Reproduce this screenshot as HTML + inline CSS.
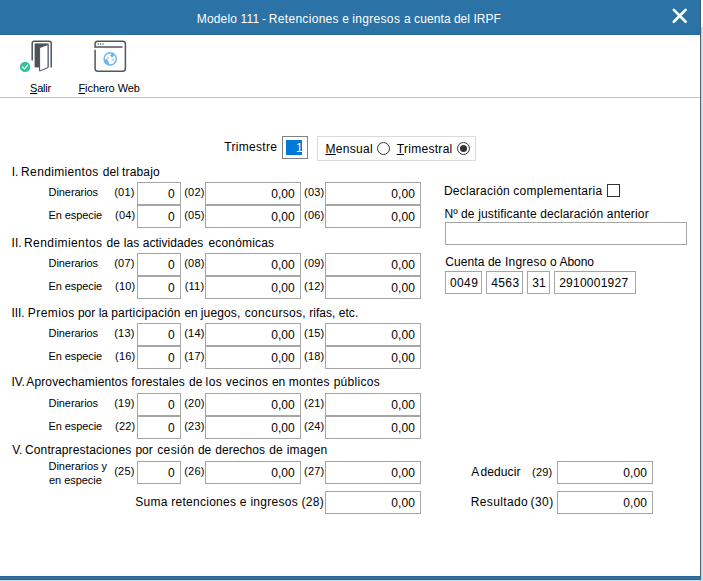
<!DOCTYPE html>
<html lang="es"><head><meta charset="utf-8"><title>Modelo 111</title><style>
html,body{margin:0;padding:0;background:#fff;}
body{width:703px;height:581px;position:relative;overflow:hidden;font-family:"Liberation Sans", Arial, sans-serif;}
.t{position:absolute;white-space:nowrap;line-height:16px;color:#000;}
.s11{font-size:11px}.s12{font-size:12px}
.b{position:absolute;border:1px solid #a6a6a6;background:#fff;}
.r{position:absolute;width:11px;height:11px;border:1px solid #333;border-radius:50%;background:#fff;}
.r i{position:absolute;left:2px;top:2px;width:7px;height:7px;border-radius:50%;background:#333;}
u{text-decoration:underline;}
</style></head><body>
<div style="position:absolute;left:0;top:0;width:700px;height:35px;background:#2b72a7"></div>
<div style="position:absolute;left:0;top:34px;width:700px;height:1px;background:#2a6a9a"></div>
<div class="t s12" style="left:196.80px;top:10.84px;letter-spacing:0.16px;color:#fff">Modelo</div>
<div class="t s12" style="left:240.60px;top:10.84px;letter-spacing:0.13px;color:#fff">111</div>
<div class="t s12" style="left:261.95px;top:10.84px;color:#fff">-</div>
<div class="t s12" style="left:268.80px;top:10.84px;letter-spacing:0.31px;color:#fff">Retenciones</div>
<div class="t s12" style="left:342.33px;top:10.84px;color:#fff">e</div>
<div class="t s12" style="left:352.15px;top:10.84px;letter-spacing:0.34px;color:#fff">ingresos</div>
<div class="t s12" style="left:403.92px;top:10.84px;color:#fff">a</div>
<div class="t s12" style="left:414.10px;top:10.84px;letter-spacing:0.10px;color:#fff">cuenta</div>
<div class="t s12" style="left:453.93px;top:10.84px;letter-spacing:-0.05px;color:#fff">del</div>
<div class="t s12" style="left:473.57px;top:10.84px;letter-spacing:-0.05px;color:#fff">IRPF</div>
<svg style="position:absolute;left:668px;top:4px" width="24" height="24" viewBox="668 4 24 24"><path d="M673.8 9.9 L685.6 21.7 M685.6 9.9 L673.8 21.7" stroke="#fff" stroke-width="2.7" stroke-linecap="round" fill="none"/></svg>
<div style="position:absolute;left:700px;top:0;width:1px;height:581px;background:#58676e"></div>
<div style="position:absolute;left:700px;top:0;width:1px;height:35px;background:#3b5a74"></div>
<div style="position:absolute;left:701px;top:0;width:2px;height:27px;background:#fff"></div>
<div style="position:absolute;left:701px;top:27px;width:1px;height:554px;background:#c3d5da"></div>
<div style="position:absolute;left:702px;top:27px;width:1px;height:554px;background:#d3e2e7"></div>
<div style="position:absolute;left:0;top:576px;width:701px;height:4px;background:linear-gradient(#25699b 0 25%,#2c72a5 25% 50%,#386f98 50% 75%,#435f7a 75%)"></div>
<div style="position:absolute;left:0;top:580px;width:703px;height:1px;background:#c7dbe5"></div>
<div style="position:absolute;left:0;top:97px;width:700px;height:1px;background:#c2c2c4"></div>
<svg style="position:absolute;left:15px;top:36px" width="45" height="40" viewBox="15 36 45 40">
<path d="M32.2 60.5 V43.2 a2 2 0 0 1 2 -2 H49.2 a2 2 0 0 1 2 2 V67.5" fill="none" stroke="#4d535b" stroke-width="1.5"/>
<path d="M34.6 43.4 H48.6 V67.4 H34.6 Z" fill="#4d535b"/>
<path d="M39.6 47.6 L48 44.6 V67.6 L39.6 71 Z" fill="#fff" stroke="#4d535b" stroke-width="1"/>
<circle cx="25.1" cy="66.9" r="5.2" fill="#2fc39c"/>
<path d="M22.6 67 L24.4 68.9 L27.7 65.1" fill="none" stroke="#fff" stroke-width="1.3" stroke-linecap="round" stroke-linejoin="round"/>
</svg>
<div class="t s11" style="left:30.00px;top:80.19px;letter-spacing:-0.19px"><u>S</u>alir</div>
<svg style="position:absolute;left:90px;top:36px" width="40" height="40" viewBox="90 36 40 40">
<rect x="95.1" y="41.2" width="30.3" height="30" rx="2.6" fill="#fff" stroke="#51565e" stroke-width="1.5"/>
<rect x="94" y="47.8" width="2.2" height="1.9" fill="#fff"/>
<path d="M95.2 47 H122.5" stroke="#51565e" stroke-width="1.5" fill="none"/>
<circle cx="98.3" cy="44" r="0.7" fill="#51565e"/><circle cx="100.6" cy="44" r="0.7" fill="#51565e"/><circle cx="102.9" cy="44" r="0.7" fill="#51565e"/>
<circle cx="110.2" cy="58.9" r="6.1" fill="#fff" stroke="#6ab4f2" stroke-width="1.4"/>
<path d="M104.2 59.4 q1.6 0.4 2.6 -0.6 q1.2 0.8 0.9 2.1 q1.4 0.5 1.2 1.9 q0.6 1.2 -0.4 2.4 q-3.4 -0.4 -4.3 -5.8z" fill="#6ab4f2"/>
<path d="M109.9 55.5 q1 -1.4 2.4 -1.8 l2.2 1.4 q-1 0.5 -1.2 1.5 q-0.8 1 -1.8 0.6 q-0.6 -1.1 -1.6 -1.7z" fill="#6ab4f2"/>
<path d="M111.5 60 h2.7" stroke="#6ab4f2" stroke-width="1" fill="none"/>
<circle cx="108" cy="57.9" r="0.8" fill="#6ab4f2"/>
</svg>
<div class="t s11" style="left:78.40px;top:80.19px;letter-spacing:-0.06px"><u>F</u>ichero Web</div>
<div class="t s12" style="left:224.35px;top:138.84px;letter-spacing:0.29px">Trimestre</div>
<div class="b" style="left:282px;top:136px;width:24px;height:21px;border-color:#808080"></div>
<div style="position:absolute;left:286px;top:140px;width:16px;height:15px;background:#0078d7"></div>
<div class="t s12" style="left:295.88px;top:139.84px;color:#fff">1</div>
<div class="b" style="left:317px;top:136px;width:157px;height:23px;border-color:#dadada"></div>
<div class="t s12" style="left:325.50px;top:140.84px;letter-spacing:0.30px"><u>M</u>ensual</div>
<div class="t s12" style="left:396.75px;top:140.84px;letter-spacing:0.29px"><u>T</u>rimestral</div>
<div class="r" style="left:377px;top:142px"></div>
<div class="r" style="left:457px;top:142px"><i></i></div>
<div class="t s12" style="left:11.70px;top:163.84px">I.</div>
<div class="t s12" style="left:21.10px;top:163.84px;letter-spacing:0.35px">Rendimientos</div>
<div class="t s12" style="left:102.80px;top:163.84px;letter-spacing:0.02px">del</div>
<div class="t s12" style="left:121.95px;top:163.84px;letter-spacing:0.18px">trabajo</div>
<div class="t s11" style="left:48.50px;top:184.19px;letter-spacing:-0.06px">Dinerarios</div>
<div class="t s11" style="left:114.23px;top:184.19px;letter-spacing:0.20px">(01)</div>
<div class="b" style="left:137px;top:182px;width:42px;height:21px;border-color:#a6a6a6"></div>
<div class="t s12" style="left:168.03px;top:185.84px">0</div>
<div class="t s11" style="left:184.22px;top:184.19px;letter-spacing:0.20px">(02)</div>
<div class="b" style="left:205px;top:182px;width:94px;height:21px;border-color:#a6a6a6"></div>
<div class="t s12" style="left:271.20px;top:185.84px;letter-spacing:0.07px">0,00</div>
<div class="t s11" style="left:304.07px;top:184.19px;letter-spacing:0.20px">(03)</div>
<div class="b" style="left:325px;top:182px;width:94px;height:21px;border-color:#a6a6a6"></div>
<div class="t s12" style="left:391.30px;top:185.84px;letter-spacing:0.07px">0,00</div>
<div class="t s11" style="left:48.50px;top:207.19px;letter-spacing:-0.09px">En especie</div>
<div class="t s11" style="left:115.08px;top:207.19px;letter-spacing:0.20px">(04)</div>
<div class="b" style="left:137px;top:205px;width:42px;height:21px;border-color:#a6a6a6"></div>
<div class="t s12" style="left:168.03px;top:208.84px">0</div>
<div class="t s11" style="left:184.22px;top:207.19px;letter-spacing:0.20px">(05)</div>
<div class="b" style="left:205px;top:205px;width:94px;height:21px;border-color:#a6a6a6"></div>
<div class="t s12" style="left:271.20px;top:208.84px;letter-spacing:0.07px">0,00</div>
<div class="t s11" style="left:304.07px;top:207.19px;letter-spacing:0.20px">(06)</div>
<div class="b" style="left:325px;top:205px;width:94px;height:21px;border-color:#a6a6a6"></div>
<div class="t s12" style="left:391.30px;top:208.84px;letter-spacing:0.07px">0,00</div>
<div class="t s12" style="left:11.60px;top:234.84px;letter-spacing:-0.05px">II.</div>
<div class="t s12" style="left:24.04px;top:234.84px;letter-spacing:0.42px">Rendimientos</div>
<div class="t s12" style="left:106.62px;top:234.84px;letter-spacing:-0.05px">de</div>
<div class="t s12" style="left:123.75px;top:234.84px;letter-spacing:0.03px">las</div>
<div class="t s12" style="left:142.70px;top:234.84px;letter-spacing:0.05px">actividades</div>
<div class="t s12" style="left:208.40px;top:234.84px;letter-spacing:0.18px">económicas</div>
<div class="t s11" style="left:48.50px;top:255.19px;letter-spacing:-0.06px">Dinerarios</div>
<div class="t s11" style="left:114.23px;top:255.19px;letter-spacing:0.20px">(07)</div>
<div class="b" style="left:137px;top:253px;width:42px;height:21px;border-color:#a6a6a6"></div>
<div class="t s12" style="left:168.03px;top:256.84px">0</div>
<div class="t s11" style="left:184.22px;top:255.19px;letter-spacing:0.20px">(08)</div>
<div class="b" style="left:205px;top:253px;width:94px;height:21px;border-color:#a6a6a6"></div>
<div class="t s12" style="left:271.20px;top:256.84px;letter-spacing:0.07px">0,00</div>
<div class="t s11" style="left:304.07px;top:255.19px;letter-spacing:0.20px">(09)</div>
<div class="b" style="left:325px;top:253px;width:94px;height:21px;border-color:#a6a6a6"></div>
<div class="t s12" style="left:391.30px;top:256.84px;letter-spacing:0.07px">0,00</div>
<div class="t s11" style="left:48.50px;top:278.19px;letter-spacing:-0.09px">En especie</div>
<div class="t s11" style="left:115.08px;top:278.19px;letter-spacing:0.20px">(10)</div>
<div class="b" style="left:137px;top:276px;width:42px;height:21px;border-color:#a6a6a6"></div>
<div class="t s12" style="left:168.03px;top:279.84px">0</div>
<div class="t s11" style="left:184.72px;top:278.19px;letter-spacing:0.20px">(11)</div>
<div class="b" style="left:205px;top:276px;width:94px;height:21px;border-color:#a6a6a6"></div>
<div class="t s12" style="left:271.20px;top:279.84px;letter-spacing:0.07px">0,00</div>
<div class="t s11" style="left:304.07px;top:278.19px;letter-spacing:0.20px">(12)</div>
<div class="b" style="left:325px;top:276px;width:94px;height:21px;border-color:#a6a6a6"></div>
<div class="t s12" style="left:391.30px;top:279.84px;letter-spacing:0.07px">0,00</div>
<div class="t s12" style="left:11.50px;top:304.84px;letter-spacing:-0.05px">III.</div>
<div class="t s12" style="left:27.84px;top:304.84px;letter-spacing:0.42px">Premios</div>
<div class="t s12" style="left:77.95px;top:304.84px;letter-spacing:-0.05px">por</div>
<div class="t s12" style="left:98.70px;top:304.84px;letter-spacing:-0.05px">la</div>
<div class="t s12" style="left:111.25px;top:304.84px;letter-spacing:0.16px">participación</div>
<div class="t s12" style="left:184.50px;top:304.84px;letter-spacing:-0.05px">en</div>
<div class="t s12" style="left:200.75px;top:304.84px;letter-spacing:0.15px">juegos,</div>
<div class="t s12" style="left:244.80px;top:304.84px;letter-spacing:0.32px">concursos,</div>
<div class="t s12" style="left:309.25px;top:304.84px;letter-spacing:0.03px">rifas,</div>
<div class="t s12" style="left:338.70px;top:304.84px;letter-spacing:0.08px">etc.</div>
<div class="t s11" style="left:48.50px;top:325.19px;letter-spacing:-0.06px">Dinerarios</div>
<div class="t s11" style="left:114.23px;top:325.19px;letter-spacing:0.20px">(13)</div>
<div class="b" style="left:137px;top:323px;width:42px;height:21px;border-color:#a6a6a6"></div>
<div class="t s12" style="left:168.03px;top:326.84px">0</div>
<div class="t s11" style="left:184.22px;top:325.19px;letter-spacing:0.20px">(14)</div>
<div class="b" style="left:205px;top:323px;width:94px;height:21px;border-color:#a6a6a6"></div>
<div class="t s12" style="left:271.20px;top:326.84px;letter-spacing:0.07px">0,00</div>
<div class="t s11" style="left:304.07px;top:325.19px;letter-spacing:0.20px">(15)</div>
<div class="b" style="left:325px;top:323px;width:94px;height:21px;border-color:#a6a6a6"></div>
<div class="t s12" style="left:391.30px;top:326.84px;letter-spacing:0.07px">0,00</div>
<div class="t s11" style="left:48.50px;top:348.19px;letter-spacing:-0.09px">En especie</div>
<div class="t s11" style="left:115.08px;top:348.19px;letter-spacing:0.20px">(16)</div>
<div class="b" style="left:137px;top:346px;width:42px;height:21px;border-color:#a6a6a6"></div>
<div class="t s12" style="left:168.03px;top:349.84px">0</div>
<div class="t s11" style="left:184.22px;top:348.19px;letter-spacing:0.20px">(17)</div>
<div class="b" style="left:205px;top:346px;width:94px;height:21px;border-color:#a6a6a6"></div>
<div class="t s12" style="left:271.20px;top:349.84px;letter-spacing:0.07px">0,00</div>
<div class="t s11" style="left:304.07px;top:348.19px;letter-spacing:0.20px">(18)</div>
<div class="b" style="left:325px;top:346px;width:94px;height:21px;border-color:#a6a6a6"></div>
<div class="t s12" style="left:391.30px;top:349.84px;letter-spacing:0.07px">0,00</div>
<div class="t s12" style="left:11.40px;top:373.84px;letter-spacing:-0.05px">IV.</div>
<div class="t s12" style="left:26.30px;top:373.84px;letter-spacing:0.13px">Aprovechamientos</div>
<div class="t s12" style="left:131.35px;top:373.84px;letter-spacing:0.15px">forestales</div>
<div class="t s12" style="left:189.08px;top:373.84px;letter-spacing:-0.05px">de</div>
<div class="t s12" style="left:205.56px;top:373.84px;letter-spacing:0.42px">los</div>
<div class="t s12" style="left:225.70px;top:373.84px;letter-spacing:0.26px">vecinos</div>
<div class="t s12" style="left:272.00px;top:373.84px;letter-spacing:-0.05px">en</div>
<div class="t s12" style="left:288.65px;top:373.84px;letter-spacing:0.31px">montes</div>
<div class="t s12" style="left:333.65px;top:373.84px;letter-spacing:0.31px">públicos</div>
<div class="t s11" style="left:48.50px;top:395.19px;letter-spacing:-0.06px">Dinerarios</div>
<div class="t s11" style="left:114.23px;top:395.19px;letter-spacing:0.20px">(19)</div>
<div class="b" style="left:137px;top:393px;width:42px;height:21px;border-color:#a6a6a6"></div>
<div class="t s12" style="left:168.03px;top:396.84px">0</div>
<div class="t s11" style="left:184.22px;top:395.19px;letter-spacing:0.20px">(20)</div>
<div class="b" style="left:205px;top:393px;width:94px;height:21px;border-color:#a6a6a6"></div>
<div class="t s12" style="left:271.20px;top:396.84px;letter-spacing:0.07px">0,00</div>
<div class="t s11" style="left:304.07px;top:395.19px;letter-spacing:0.20px">(21)</div>
<div class="b" style="left:325px;top:393px;width:94px;height:21px;border-color:#a6a6a6"></div>
<div class="t s12" style="left:391.30px;top:396.84px;letter-spacing:0.07px">0,00</div>
<div class="t s11" style="left:48.50px;top:418.19px;letter-spacing:-0.09px">En especie</div>
<div class="t s11" style="left:115.08px;top:418.19px;letter-spacing:0.20px">(22)</div>
<div class="b" style="left:137px;top:416px;width:42px;height:21px;border-color:#a6a6a6"></div>
<div class="t s12" style="left:168.03px;top:419.84px">0</div>
<div class="t s11" style="left:184.22px;top:418.19px;letter-spacing:0.20px">(23)</div>
<div class="b" style="left:205px;top:416px;width:94px;height:21px;border-color:#a6a6a6"></div>
<div class="t s12" style="left:271.20px;top:419.84px;letter-spacing:0.07px">0,00</div>
<div class="t s11" style="left:304.07px;top:418.19px;letter-spacing:0.20px">(24)</div>
<div class="b" style="left:325px;top:416px;width:94px;height:21px;border-color:#a6a6a6"></div>
<div class="t s12" style="left:391.30px;top:419.84px;letter-spacing:0.07px">0,00</div>
<div class="t s12" style="left:12.20px;top:441.84px;letter-spacing:-0.05px">V.</div>
<div class="t s12" style="left:25.00px;top:441.84px;letter-spacing:0.13px">Contraprestaciones</div>
<div class="t s12" style="left:135.45px;top:441.84px;letter-spacing:-0.05px">por</div>
<div class="t s12" style="left:157.20px;top:441.84px;letter-spacing:0.42px">cesión</div>
<div class="t s12" style="left:197.92px;top:441.84px;letter-spacing:-0.05px">de</div>
<div class="t s12" style="left:215.20px;top:441.84px;letter-spacing:0.07px">derechos</div>
<div class="t s12" style="left:269.27px;top:441.84px;letter-spacing:-0.05px">de</div>
<div class="t s12" style="left:286.65px;top:441.84px;letter-spacing:0.26px">imagen</div>
<div class="t s11" style="left:48.50px;top:458.19px;letter-spacing:-0.01px">Dinerarios y</div>
<div class="t s11" style="left:49.00px;top:472.19px;letter-spacing:-0.04px">en especie</div>
<div class="t s11" style="left:114.23px;top:463.19px;letter-spacing:0.20px">(25)</div>
<div class="b" style="left:137px;top:461px;width:42px;height:21px;border-color:#a6a6a6"></div>
<div class="t s12" style="left:168.03px;top:464.84px">0</div>
<div class="t s11" style="left:184.22px;top:463.19px;letter-spacing:0.20px">(26)</div>
<div class="b" style="left:205px;top:461px;width:94px;height:21px;border-color:#a6a6a6"></div>
<div class="t s12" style="left:271.20px;top:464.84px;letter-spacing:0.07px">0,00</div>
<div class="t s11" style="left:304.07px;top:463.19px;letter-spacing:0.20px">(27)</div>
<div class="b" style="left:325px;top:461px;width:94px;height:21px;border-color:#a6a6a6"></div>
<div class="t s12" style="left:391.30px;top:464.84px;letter-spacing:0.07px">0,00</div>
<div class="t s12" style="left:135.20px;top:493.84px;letter-spacing:0.27px">Suma retenciones e ingresos (28)</div>
<div class="b" style="left:325px;top:491px;width:94px;height:21px;border-color:#a6a6a6"></div>
<div class="t s12" style="left:391.30px;top:494.84px;letter-spacing:0.07px">0,00</div>
<div class="t s12" style="left:471.15px;top:463.84px">A</div>
<div class="t s12" style="left:480.40px;top:463.84px;letter-spacing:0.12px">deducir</div>
<div class="t s11" style="left:532.12px;top:464.19px;letter-spacing:0.20px">(29)</div>
<div class="b" style="left:557px;top:461px;width:94px;height:21px;border-color:#a6a6a6"></div>
<div class="t s12" style="left:623.30px;top:464.84px;letter-spacing:0.13px">0,00</div>
<div class="t s12" style="left:470.80px;top:493.84px;letter-spacing:0.36px">Resultado</div>
<div class="t s12" style="left:530.62px;top:493.84px;letter-spacing:0.42px">(30)</div>
<div class="b" style="left:557px;top:491px;width:94px;height:21px;border-color:#a6a6a6"></div>
<div class="t s12" style="left:623.30px;top:494.84px;letter-spacing:0.13px">0,00</div>
<div class="t s12" style="left:443.90px;top:182.84px;letter-spacing:0.25px">Declaración</div>
<div class="t s12" style="left:513.20px;top:182.84px;letter-spacing:0.28px">complementaria</div>
<div style="position:absolute;left:607px;top:184px;width:11px;height:11px;border:1px solid #333;background:#fff"></div>
<div class="t s12" style="left:444.50px;top:205.84px;letter-spacing:0.10px">Nº</div>
<div class="t s12" style="left:461.02px;top:205.84px;letter-spacing:-0.05px">de</div>
<div class="t s12" style="left:478.15px;top:205.84px;letter-spacing:0.16px">justificante</div>
<div class="t s12" style="left:540.20px;top:205.84px;letter-spacing:0.15px">declaración</div>
<div class="t s12" style="left:606.80px;top:205.84px;letter-spacing:0.17px">anterior</div>
<div class="b" style="left:445px;top:222px;width:240px;height:21px;border-color:#a6a6a6"></div>
<div class="t s12" style="left:445.20px;top:253.84px;letter-spacing:0.09px">Cuenta</div>
<div class="t s12" style="left:487.88px;top:253.84px;letter-spacing:-0.05px">de</div>
<div class="t s12" style="left:505.00px;top:253.84px;letter-spacing:0.22px">Ingreso</div>
<div class="t s12" style="left:550.08px;top:253.84px">o</div>
<div class="t s12" style="left:559.50px;top:253.84px;letter-spacing:-0.04px">Abono</div>
<div class="b" style="left:445px;top:271px;width:35px;height:21px;border-color:#a6a6a6"></div>
<div class="t s12" style="left:450.00px;top:274.84px;letter-spacing:0.38px">0049</div>
<div class="b" style="left:486px;top:271px;width:35px;height:21px;border-color:#a6a6a6"></div>
<div class="t s12" style="left:491.17px;top:274.84px;letter-spacing:0.42px">4563</div>
<div class="b" style="left:527px;top:271px;width:21px;height:21px;border-color:#a6a6a6"></div>
<div class="t s12" style="left:532.35px;top:274.84px;letter-spacing:-0.05px">31</div>
<div class="b" style="left:554px;top:271px;width:80px;height:21px;border-color:#a6a6a6"></div>
<div class="t s12" style="left:559.20px;top:274.84px;letter-spacing:0.24px">2910001927</div>
</body></html>
